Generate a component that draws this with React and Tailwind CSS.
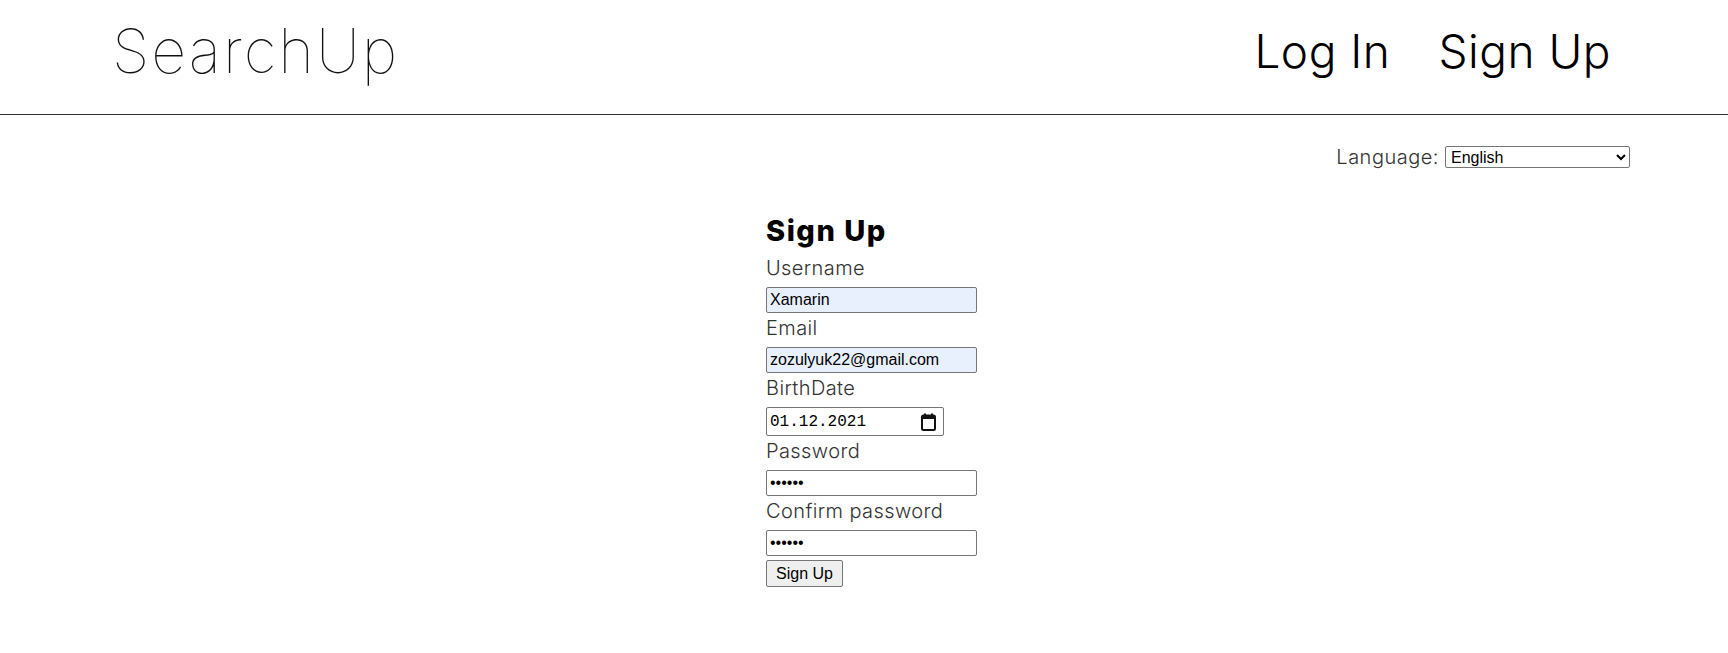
import React from 'react';

const display = { fontFamily: 'Inter, "Noto Sans", sans-serif' };
const field = { fontFamily: '"Liberation Sans", Arial, sans-serif' };

const FormLabel = ({ children }) => (
  <div className="mt-[3px] mb-[7px] text-[20px] leading-[24px] font-light tracking-[0.4px] text-[#333333]">{children}</div>
);

const TextField = ({ type = 'text', value, autofill }) => (
  <input
    type={type}
    defaultValue={value}
    style={field}
    className={`w-[211px] h-[26px] border border-[#767676] rounded-[2px] px-[3px] text-[16px] text-black outline-none ${
      autofill ? 'bg-[#e8f0fe]' : 'bg-white'
    }`}
  />
);

const CalendarIcon = () => (
  <svg width="15" height="18" viewBox="0 0 15 18" fill="none">
    <rect x="3" y="0.5" width="2" height="3" fill="#111" />
    <rect x="10" y="0.5" width="2" height="3" fill="#111" />
    <rect x="1" y="2.5" width="13" height="14.5" rx="1.5" stroke="#111" strokeWidth="2" />
    <rect x="1" y="2.5" width="13" height="3.5" fill="#111" />
  </svg>
);

export default function App() {
  return (
    <div className="min-h-screen bg-white" style={display}>
      <header className="h-[115px] border-b border-[#333333] flex justify-between items-start pl-[112px] pr-[117px]">
        <div className="mt-[21px] text-[61px] leading-[61px] font-thin tracking-[2px] text-[#111111]">SearchUp</div>
        <nav className="mt-[28px] flex gap-[48px] text-[46px] leading-[46px] font-light tracking-[0.5px] text-black">
          <a href="#">Log In</a>
          <a href="#">Sign Up</a>
        </nav>
      </header>

      <div className="mt-[30px] flex justify-end items-center pr-[98px] gap-[6px]">
        <span className="text-[20px] leading-[24px] font-light tracking-[0.5px] text-[#333333]">Language:</span>
        <select
          style={field}
          defaultValue="en"
          className="w-[185px] h-[22px] border border-[#767676] rounded-[2px] text-[16px] leading-[18px] text-black bg-white px-[1px] py-0"
        >
          <option value="en">English</option>
          <option value="ru">Русский</option>
          <option value="uk">Українська</option>
        </select>
      </div>

      <form className="mt-[46px] ml-[766px] flex flex-col items-start" onSubmit={(e) => e.preventDefault()}>
        <h2 className="mb-[6px] text-[29px] leading-[32px] font-extrabold tracking-[1.5px] text-black">Sign Up</h2>

        <FormLabel>Username</FormLabel>
        <TextField value="Xamarin" autofill />

        <FormLabel>Email</FormLabel>
        <TextField type="email" value="zozulyuk22@gmail.com" autofill />

        <FormLabel>BirthDate</FormLabel>
        <div className="w-[178px] h-[29px] border border-[#767676] rounded-[2px] flex items-center justify-between pl-[3px] pr-[7px]">
          <span className="text-[16px] text-black" style={{ fontFamily: '"Liberation Mono", "DejaVu Sans Mono", monospace' }}>
            01.12.2021
          </span>
          <CalendarIcon />
        </div>

        <FormLabel>Password</FormLabel>
        <TextField type="password" value="123456" />

        <FormLabel>Confirm password</FormLabel>
        <TextField type="password" value="123456" />

        <button
          type="submit"
          style={field}
          className="mt-[4px] h-[27px] px-[9px] bg-[#efefef] border border-[#767676] rounded-[2px] text-[16px] text-black"
        >
          Sign Up
        </button>
      </form>
    </div>
  );
}
